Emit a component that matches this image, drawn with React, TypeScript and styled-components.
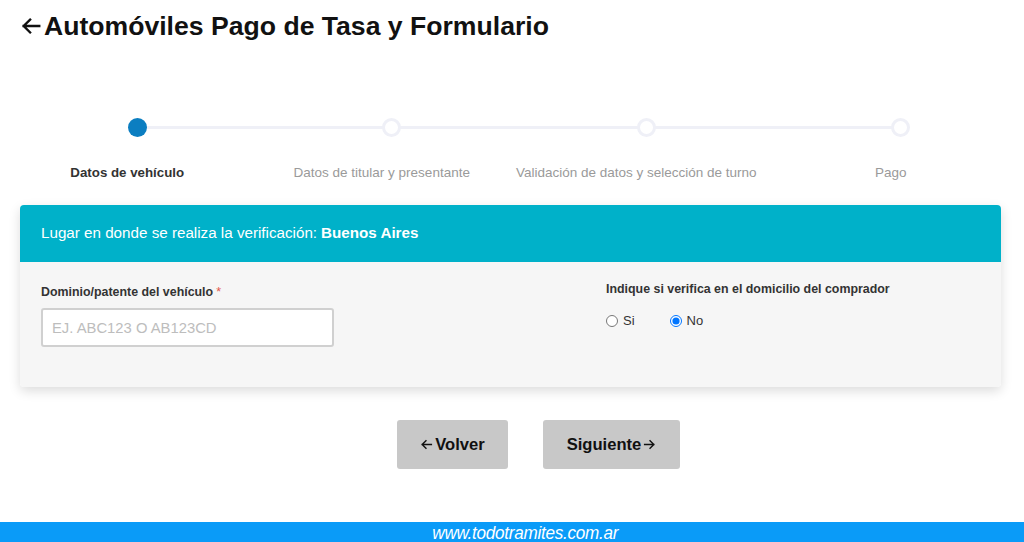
import styled, { createGlobalStyle } from 'styled-components';

const GlobalStyle = createGlobalStyle`
  html, body {
    margin: 0;
    padding: 0;
    background: #fff;
    font-family: "Liberation Sans", Arial, sans-serif;
  }
`;

const Page = styled.div`
  width: 1024px;
  height: 542px;
  display: flex;
  flex-direction: column;
  overflow: hidden;
`;

const Title = styled.h1`
  margin: 11px 0 0 20px;
  font-size: 26.6px;
  line-height: 30px;
  font-weight: 700;
  color: #111;
  display: flex;
  align-items: center;

  svg {
    margin-right: 2px;
  }
`;

const Stepper = styled.div`
  position: relative;
  margin-top: 77px;
  width: 1018px;
  display: grid;
  grid-template-columns: repeat(4, 1fr);
`;

const Track = styled.div`
  position: absolute;
  top: 8px;
  left: 137px;
  width: 765px;
  height: 3px;
  background: #eff0f7;
`;

const Step = styled.div`
  position: relative;
  display: flex;
  flex-direction: column;
  align-items: center;
`;

const Dot = styled.div<{ $active?: boolean }>`
  width: 19px;
  height: 19px;
  box-sizing: border-box;
  border-radius: 50%;
  transform: translateX(10px);
  background: ${(p) => (p.$active ? '#0b7ec1' : '#fff')};
  border: ${(p) => (p.$active ? 'none' : '3px solid #eff0f7')};
`;

const StepLabel = styled.div<{ $active?: boolean }>`
  margin-top: 28px;
  font-size: ${(p) => (p.$active ? '13.3px' : '13.5px')};
  line-height: 16px;
  color: ${(p) => (p.$active ? '#333' : '#9a9a9a')};
  font-weight: ${(p) => (p.$active ? 700 : 400)};
`;

const Card = styled.div`
  margin: 24px 0 0 20px;
  width: 981px;
  border-radius: 4px;
  box-shadow: 0 4px 12px rgba(0, 0, 0, 0.14);
  overflow: hidden;
`;

const CardHeader = styled.div`
  height: 57px;
  background: #00b1c9;
  color: #fff;
  font-size: 15.2px;
  display: flex;
  align-items: center;
  padding: 0 21px;
  padding-bottom: 2px;
  box-sizing: border-box;

  b {
    margin-left: 4px;
  }
`;

const CardBody = styled.div`
  background: #f6f6f6;
  height: 125px;
  box-sizing: border-box;
  padding: 20px 21px;
  display: grid;
  grid-template-columns: 565px 1fr;
`;

const Field = styled.div`
  display: flex;
  flex-direction: column;
`;

const FieldLabel = styled.label<{ $shift?: number }>`
  font-size: 12.4px;
  line-height: 15px;
  font-weight: 700;
  color: #333;
  margin-top: ${(p) => p.$shift ?? 0}px;

  span {
    color: #e2574c;
    font-weight: 400;
    margin-left: 3px;
  }
`;

const TextInput = styled.input`
  margin-top: 8px;
  width: 293px;
  height: 39px;
  box-sizing: border-box;
  border: 2px solid #d0d0d0;
  border-radius: 3px;
  background: #fff;
  padding: 0 9px;
  font-family: "Liberation Sans", Arial, sans-serif;
  font-size: 14.8px;
  outline: none;

  &::placeholder {
    color: #bdbdbd;
  }
`;

const RadioRow = styled.div`
  display: flex;
  gap: 35px;
  margin-top: 16px;
`;

const RadioOption = styled.label`
  display: flex;
  align-items: center;
  font-size: 13px;
  color: #333;

  input {
    margin: 0 5px 0 0;
    width: 12px;
    height: 12px;
  }
`;

const Actions = styled.div`
  display: flex;
  justify-content: center;
  gap: 35px;
  margin-top: 33px;
  padding-left: 53px;
`;

const Button = styled.button<{ $w: number }>`
  width: ${(p) => p.$w}px;
  height: 49px;
  border: none;
  border-radius: 3px;
  background: #c8c8c8;
  color: #111;
  font-family: "Liberation Sans", Arial, sans-serif;
  font-size: 16.6px;
  font-weight: 700;
  display: flex;
  align-items: center;
  justify-content: center;
  gap: 2px;
`;

const Footer = styled.div`
  margin-top: auto;
  height: 20px;
  background: #0a9bf8;
  display: flex;
  align-items: center;
  justify-content: center;
  padding-left: 26px;
  overflow: hidden;
`;

const FooterText = styled.span`
  color: #fff;
  font-style: italic;
  font-size: 19px;
  line-height: 20px;
  letter-spacing: -0.3px;
  transform: scaleX(0.9);
  padding-top: 2px;
`;

const Arrow = ({ size, dir }: { size: number; dir: 'left' | 'right' }) => (
  <svg width={size} height={size} viewBox="0 0 24 24" fill="none" stroke="currentColor" strokeWidth={2.6} strokeLinecap="square">
    {dir === 'left' ? (
      <path d="M21 12H4M11 5l-7 7 7 7" />
    ) : (
      <path d="M3 12h17M13 5l7 7-7 7" />
    )}
  </svg>
);

const steps = [
  'Datos de vehículo',
  'Datos de titular y presentante',
  'Validación de datos y selección de turno',
  'Pago',
];

export default function App() {
  return (
    <Page>
      <GlobalStyle />
      <Title>
        <Arrow size={22} dir="left" />
        Automóviles Pago de Tasa y Formulario
      </Title>

      <Stepper>
        <Track />
        {steps.map((s, i) => (
          <Step key={s}>
            <Dot $active={i === 0} />
            <StepLabel $active={i === 0}>{s}</StepLabel>
          </Step>
        ))}
      </Stepper>

      <Card>
        <CardHeader>
          Lugar en donde se realiza la verificación: <b>Buenos Aires</b>
        </CardHeader>
        <CardBody>
          <Field>
            <FieldLabel $shift={3}>
              Dominio/patente del vehículo<span>*</span>
            </FieldLabel>
            <TextInput placeholder="EJ. ABC123 O AB123CD" />
          </Field>
          <Field>
            <FieldLabel>Indique si verifica en el domicilio del comprador</FieldLabel>
            <RadioRow>
              <RadioOption>
                <input type="radio" name="dom" /> Si
              </RadioOption>
              <RadioOption>
                <input type="radio" name="dom" defaultChecked /> No
              </RadioOption>
            </RadioRow>
          </Field>
        </CardBody>
      </Card>

      <Actions>
        <Button $w={111}>
          <Arrow size={13} dir="left" />
          Volver
        </Button>
        <Button $w={137}>
          Siguiente
          <Arrow size={13} dir="right" />
        </Button>
      </Actions>

      <Footer>
        <FooterText>www.todotramites.com.ar</FooterText>
      </Footer>
    </Page>
  );
}
